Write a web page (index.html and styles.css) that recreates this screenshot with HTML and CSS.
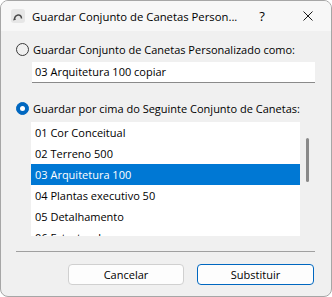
FILE: index.html
```html
<!DOCTYPE html>
<html lang="pt">
<head>
  <meta charset="UTF-8">
  <title>Guardar Conjunto de Canetas Personalizado</title>
  <link rel="stylesheet" href="styles.css">
</head>
<body>
  <div class="window">
    <div class="titlebar">
      <svg class="app-icon" width="14" height="14" viewBox="0 0 14 14">
        <rect x="0" y="0" width="14" height="14" rx="3" fill="#e6e6e6"/>
        <path d="M3.5 11 C3.5 5, 10.5 4, 10.5 9.5" fill="none" stroke="#4a4a4a" stroke-width="1.5"/>
        <path d="M2.2 11.5 L3.2 8.6 L4.9 10.8 Z" fill="#4a4a4a"/>
      </svg>
      <span class="title">Guardar Conjunto de Canetas Person...</span>
      <span class="tb-btn help">?</span>
      <span class="tb-btn close">
        <svg width="10" height="10" viewBox="0 0 10 10">
          <path d="M0.5 0.5 L9.5 9.5 M9.5 0.5 L0.5 9.5" stroke="#1a1a1a" stroke-width="1"/>
        </svg>
      </span>
    </div>

    <div class="content">
      <label class="radio-row"><span class="radio"></span>Guardar Conjunto de Canetas Personalizado como:</label>
      <div class="textfield">03 Arquitetura 100 copiar</div>

      <label class="radio-row second"><span class="radio checked"></span>Guardar por cima do Seguinte Conjunto de Canetas:</label>
      <div class="listbox">
        <ul class="items">
          <li>01 Cor Conceitual</li>
          <li>02 Terreno 500</li>
          <li class="selected">03 Arquitetura 100</li>
          <li>04 Plantas executivo 50</li>
          <li>05 Detalhamento</li>
          <li>06 Estrutural</li>
        </ul>
        <div class="scrollbar"><div class="thumb"></div></div>
      </div>

      <div class="separator"></div>

      <div class="buttons">
        <button class="btn cancel">Cancelar</button>
        <button class="btn default">Substituir</button>
      </div>
    </div>
  </div>
</body>
</html>
```

FILE: styles.css
```css
body {
  margin: 0;
  padding: 0;
  background-color: #ffffff;
  font-family: "Open Sans", "Noto Sans", Arial, sans-serif;
  font-size: 11px;
  color: #000;
}

.window {
  width: 332px;
  height: 297px;
  box-sizing: border-box;
  border: 1px solid #a6a6a6;
  border-radius: 8px;
  background-color: #f0f0f0;
  overflow: hidden;
}

.titlebar {
  height: 30px;
  display: flex;
  align-items: center;
  background-color: #f7f7f7;
}

.app-icon {
  margin-left: 10px;
  margin-top: -1px;
}

.title {
  margin-left: 7px;
  flex: 1;
  font-size: 11.3px;
  white-space: nowrap;
}

.tb-btn {
  width: 44px;
  height: 30px;
  display: flex;
  align-items: center;
  justify-content: center;
}

.help {
  font-size: 13px;
  margin-right: 2px;
}

.close {
  margin-right: 1px;
}

.content {
  padding: 0 15px;
}

.radio-row {
  display: flex;
  align-items: center;
  height: 16px;
  margin-top: 10px;
  white-space: nowrap;
}

.radio-row.second {
  margin-top: 17px;
}

.radio {
  width: 13px;
  height: 13px;
  box-sizing: border-box;
  border: 1px solid #3a3a3a;
  border-radius: 50%;
  margin-right: 4px;
  flex-shrink: 0;
  position: relative;
}

.radio.checked {
  border-color: #0067c0;
  background-color: #0067c0;
}

.radio.checked::after {
  content: "";
  position: absolute;
  left: 3px;
  top: 3px;
  width: 5px;
  height: 5px;
  border-radius: 50%;
  background-color: #fff;
}

.textfield {
  margin-top: 5px;
  margin-left: 16px;
  width: 283px;
  height: 21px;
  box-sizing: border-box;
  background-color: #fff;
  border-bottom: 1px solid #8a8a8a;
  padding-left: 3px;
  line-height: 20px;
  white-space: nowrap;
}

.listbox {
  margin-top: 6px;
  margin-left: 15px;
  height: 114px;
  display: flex;
}

.items {
  list-style: none;
  margin: 0;
  padding: 0;
  width: 269px;
  background-color: #fff;
  overflow: hidden;
}

.items li {
  height: 21px;
  line-height: 21px;
  padding-left: 4px;
  white-space: nowrap;
}

.items li.selected {
  background-color: #0078d4;
  color: #fff;
}

.scrollbar {
  width: 16px;
}

.thumb {
  margin-top: 16px;
  margin-left: 6px;
  width: 3px;
  height: 44px;
  border-radius: 2px;
  background-color: #8a8a8a;
}

.separator {
  margin-top: 15px;
  margin-right: 1px;
  height: 1px;
  background-color: #a0a0a0;
}

.buttons {
  display: flex;
  justify-content: flex-end;
  gap: 13px;
  margin-top: 12px;
  margin-right: 2px;
}

.btn {
  height: 21px;
  box-sizing: border-box;
  border: 1px solid #d0d0d0;
  border-radius: 4px;
  background-color: #fdfdfd;
  font-family: inherit;
  font-size: 11px;
  color: #000;
  padding: 0;
}

.cancel {
  width: 116px;
}

.default {
  width: 117px;
  border-color: #0067c0;
}
```
